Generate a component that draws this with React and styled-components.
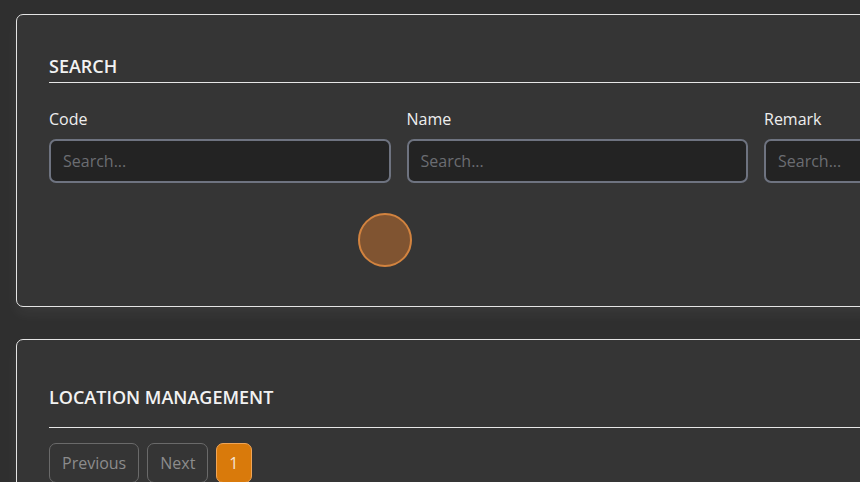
import React from "react";
import styled, { createGlobalStyle } from "styled-components";

const Global = createGlobalStyle`
  html, body {
    margin: 0;
    padding: 0;
    background: #2f2f2f;
    overflow: hidden;
  }
  body {
    font-family: "Open Sans", "Noto Sans", sans-serif;
    color: #ececec;
  }
`;

const Page = styled.div`
  position: relative;
  display: flex;
  flex-direction: column;
  gap: 32px;
  padding: 14px 0 0 16px;
  width: 1200px;
`;

const Card = styled.section`
  width: 1123px;
  box-sizing: border-box;
  background: #353535;
  border: 1px solid #e4e4e4;
  border-radius: 7px;
  padding: ${(p) => (p.$top ? p.$top : 38)}px 32px 0 32px;
  min-height: ${(p) => p.$minH || 0}px;
  box-shadow: 0 7px 14px rgba(255, 255, 255, 0.05);
`;

const Heading = styled.h2`
  margin: 0;
  font-size: 18px;
  line-height: 27px;
  font-weight: 600;
  letter-spacing: 0;
  color: #f2f2f2;
  padding-bottom: ${(p) => p.$pb}px;
  border-bottom: 1px solid #e6e6e6;
`;

const FieldGrid = styled.div`
  display: grid;
  grid-template-columns: repeat(3, 341.5px);
  column-gap: 16px;
  margin-top: 24px;
`;

const Field = styled.label`
  display: flex;
  flex-direction: column;
  gap: 8px;
`;

const Label = styled.span`
  font-size: 16px;
  line-height: 24px;
  color: #eeeeee;
`;

const Input = styled.input`
  box-sizing: border-box;
  height: 44px;
  width: 100%;
  background: #232323;
  border: 2px solid #6e7380;
  border-radius: 7px;
  padding: 0 12px;
  font-family: inherit;
  font-size: 16px;
  color: #ddd;
  outline: none;
  &::placeholder {
    color: #6b6d72;
  }
`;

const Pager = styled.div`
  display: flex;
  gap: 8px;
  margin-top: 15px;
`;

const PageButton = styled.button`
  box-sizing: border-box;
  height: 40px;
  padding: 0 12px;
  font-family: inherit;
  font-size: 16px;
  border-radius: 7px;
  border: 1px solid ${(p) => (p.$active ? "#f0a557" : "#6a6a6a")};
  background: ${(p) => (p.$active ? "#d97a0b" : "transparent")};
  color: ${(p) => (p.$active ? "#f6e6d4" : "#8c8c8c")};
`;

const ClickMarker = styled.div`
  position: absolute;
  left: 358px;
  top: 213px;
  width: 54px;
  height: 54px;
  box-sizing: border-box;
  border-radius: 50%;
  background: rgba(190, 110, 45, 0.55);
  border: 2px solid #d2833f;
  pointer-events: none;
`;

export default function App() {
  return (
    <>
      <Global />
      <Page>
        <Card $minH={293}>
          <Heading $pb={2}>SEARCH</Heading>
          <FieldGrid>
            <Field>
              <Label>Code</Label>
              <Input placeholder="Search..." />
            </Field>
            <Field>
              <Label>Name</Label>
              <Input placeholder="Search..." />
            </Field>
            <Field>
              <Label>Remark</Label>
              <Input placeholder="Search..." />
            </Field>
          </FieldGrid>
        </Card>
        <Card $top={44} $minH={200}>
          <Heading $pb={16}>LOCATION MANAGEMENT</Heading>
          <Pager>
            <PageButton>Previous</PageButton>
            <PageButton>Next</PageButton>
            <PageButton $active>1</PageButton>
          </Pager>
        </Card>
        <ClickMarker />
      </Page>
    </>
  );
}
